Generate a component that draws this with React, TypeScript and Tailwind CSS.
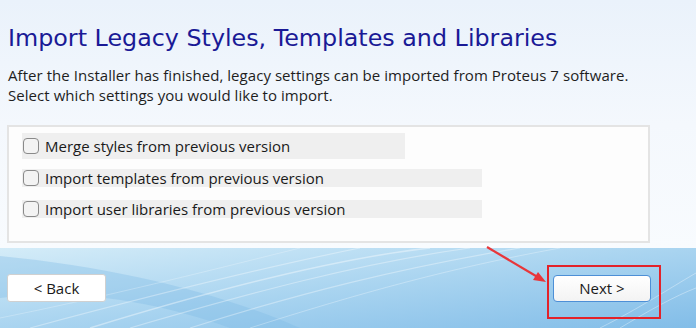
import React from 'react';

const options = [
  { label: 'Merge styles from previous version', width: 'w-[383px]', height: 'h-[26px]' },
  { label: 'Import templates from previous version', width: 'w-[460px]', height: 'h-[18px]' },
  { label: 'Import user libraries from previous version', width: 'w-[460px]', height: 'h-[18px]' },
];

function Streaks() {
  return (
    <svg className="absolute inset-0 w-full h-full" viewBox="0 0 696 80" preserveAspectRatio="none">
      <path d="M0 8 L0 50 C80 40 160 55 230 80 L300 80 C220 45 120 20 0 8 Z" fill="#7fb9e4" fillOpacity="0.35" />
      <path d="M90 80 C220 40 340 10 430 0" stroke="#ffffff" strokeOpacity="0.4" strokeWidth="1.5" fill="none" />
      <path d="M130 80 C250 45 360 15 470 0" stroke="#ffffff" strokeOpacity="0.35" strokeWidth="1.2" fill="none" />
      <path d="M190 80 C300 45 400 20 520 0" stroke="#ffffff" strokeOpacity="0.35" strokeWidth="1.2" fill="none" />
      <path d="M250 80 C360 45 450 20 560 0" stroke="#ffffff" strokeOpacity="0.3" strokeWidth="1" fill="none" />
      <path d="M30 80 C160 45 260 20 360 0" stroke="#ffffff" strokeOpacity="0.35" strokeWidth="1.2" fill="none" />
      <path d="M0 70 C100 50 200 25 300 0" stroke="#ffffff" strokeOpacity="0.25" strokeWidth="1" fill="none" />
      <path d="M600 80 C640 60 670 40 696 25" stroke="#ffffff" strokeOpacity="0.35" strokeWidth="1" fill="none" />
      <path d="M620 80 C650 62 675 48 696 40" stroke="#ffffff" strokeOpacity="0.35" strokeWidth="1" fill="none" />
    </svg>
  );
}

export default function App() {
  return (
    <div className="relative w-[696px] h-[328px] overflow-hidden flex flex-col [font-family:'Open_Sans',sans-serif]">
      {/* Upper panel */}
      <div className="h-[248px] bg-gradient-to-b from-[#eaf2fb] via-[#f4f8fd] to-[#f8fbfe] pt-[24px] px-[8px]">
        <h1 className="[font-family:'DejaVu_Sans',sans-serif] text-[23.8px] leading-[28px] text-[#1a1a96]">
          Import Legacy Styles, Templates and Libraries
        </h1>
        <p className="mt-[14px] text-[15px] leading-[19.5px] tracking-[0.05px] text-[#1e1e1e]">
          After the Installer has finished, legacy settings can be imported from Proteus 7 software.
          <br />
          Select which settings you would like to import.
        </p>

        <div className="mt-[20px] -ml-[1px] w-[643px] h-[118px] border-2 border-[#e4e4e4] bg-[#fdfdfd] pt-[6px] pl-[13px] flex flex-col">
          {options.map((opt, i) => (
            <label
              key={opt.label}
              className={`flex items-center gap-[6px] ${opt.width} ${opt.height} bg-[#efefef] ${
                i === 0 ? '' : i === 1 ? 'mt-[10px]' : 'mt-[13px]'
              }`}
            >
              <span className="ml-[1px] w-[16px] h-[16px] rounded-[4px] border border-[#8a8a8a] bg-[#f3f3f3]" />
              <span className="text-[15px] text-[#1a1a1a] leading-none">{opt.label}</span>
            </label>
          ))}
        </div>
      </div>

      {/* Bottom band */}
      <div className="relative flex-1 bg-gradient-to-br from-[#d4ecf8] via-[#a9d4f0] to-[#82bde8]">
        <Streaks />
        <div className="relative flex justify-between pt-[26px] pl-[7px] pr-[45px]">
          <button className="w-[99px] h-[28px] rounded-[3px] border border-[#d0d0d0] bg-white text-[15px] text-[#1a1a1a]">
            &lt; Back
          </button>
          <button className="mt-[1px] w-[98px] h-[27px] rounded-[4px] border-[1.5px] border-[#4d8fd6] bg-gradient-to-b from-white to-[#f3f3f3] text-[15px] text-[#1a1a1a]">
            Next &gt;
          </button>
        </div>
      </div>

      {/* Annotation overlay */}
      <div className="absolute left-[547px] top-[265px] w-[114px] h-[54px] border-2 border-[#e3222a]" />
      <svg className="absolute left-0 top-0 pointer-events-none" width="696" height="328">
        <line x1="487" y1="247" x2="541" y2="279" stroke="#e8363a" strokeWidth="2.2" />
        <polygon points="546,282 533,280 538,272" fill="#e8363a" />
      </svg>
    </div>
  );
}
